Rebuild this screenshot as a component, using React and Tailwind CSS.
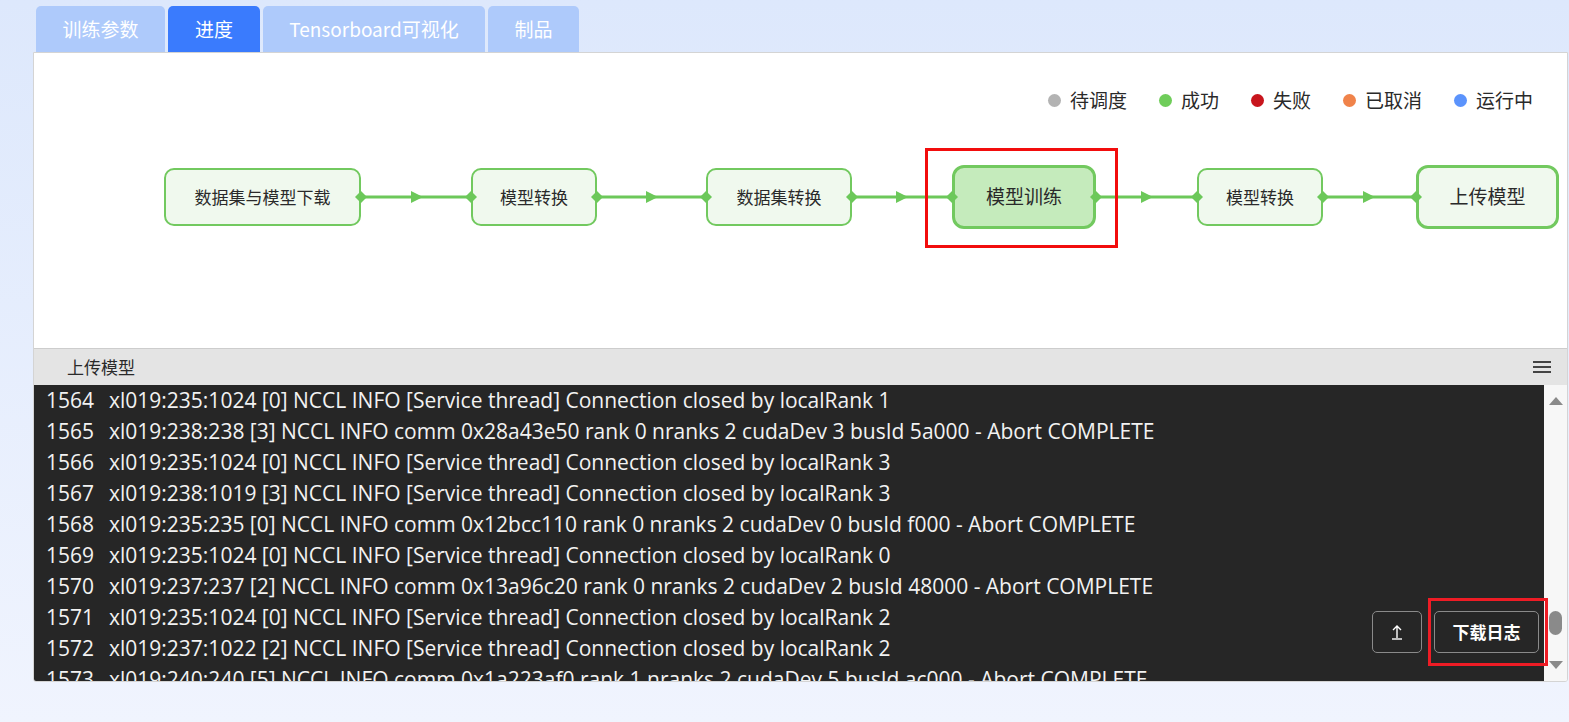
const tabs = [
  { label: "训练参数", w: "w-[129px]" },
  { label: "进度", w: "w-[92px]", active: true },
  { label: "Tensorboard可视化", w: "w-[222px]" },
  { label: "制品", w: "w-[91px]" },
];

const legend = [
  { label: "待调度", color: "bg-[#b3b3b3]" },
  { label: "成功", color: "bg-[#6fcd5a]" },
  { label: "失败", color: "bg-[#c8151d]" },
  { label: "已取消", color: "bg-[#f0834a]" },
  { label: "运行中", color: "bg-[#5b93fc]" },
];

const logs = [
  ["1564", "xl019:235:1024 [0] NCCL INFO [Service thread] Connection closed by localRank 1"],
  ["1565", "xl019:238:238 [3] NCCL INFO comm 0x28a43e50 rank 0 nranks 2 cudaDev 3 busId 5a000 - Abort COMPLETE"],
  ["1566", "xl019:235:1024 [0] NCCL INFO [Service thread] Connection closed by localRank 3"],
  ["1567", "xl019:238:1019 [3] NCCL INFO [Service thread] Connection closed by localRank 3"],
  ["1568", "xl019:235:235 [0] NCCL INFO comm 0x12bcc110 rank 0 nranks 2 cudaDev 0 busId f000 - Abort COMPLETE"],
  ["1569", "xl019:235:1024 [0] NCCL INFO [Service thread] Connection closed by localRank 0"],
  ["1570", "xl019:237:237 [2] NCCL INFO comm 0x13a96c20 rank 0 nranks 2 cudaDev 2 busId 48000 - Abort COMPLETE"],
  ["1571", "xl019:235:1024 [0] NCCL INFO [Service thread] Connection closed by localRank 2"],
  ["1572", "xl019:237:1022 [2] NCCL INFO [Service thread] Connection closed by localRank 2"],
  ["1573", "xl019:240:240 [5] NCCL INFO comm 0x1a223af0 rank 1 nranks 2 cudaDev 5 busId ac000 - Abort COMPLETE"],
];

const cjk = "font-['Noto_Sans_CJK_SC',sans-serif]";

// flow edge: diamond on both ends, arrow head a bit past the middle
const Connector = ({ w }) => {
  const tip = Math.round(w * 0.56);
  return (
    <svg width={w} height="14" className="overflow-visible shrink-0 relative z-10">
      <line x1="0" y1="7" x2={w} y2="7" stroke="#6cc85a" strokeWidth="3" />
      <polygon points="-6,7 0,1 6,7 0,13" fill="#6cc85a" />
      <polygon points={`${w - 6},7 ${w},1 ${w + 6},7 ${w},13`} fill="#6cc85a" />
      <polygon points={`${tip - 12},1 ${tip},7 ${tip - 12},13`} fill="#6cc85a" />
    </svg>
  );
};

const Node = ({ label, w, big, active }) => (
  <div
    className={`${w} ${big ? "h-[64px] text-[19px] rounded-[12px] border-[3px]" : "h-[58px] text-[17px] rounded-[10px] border-2"} ${
      active ? "bg-[#c5ebbc]" : "bg-[#f0f9ee]"
    } border-[#72c95f] flex items-center justify-center text-[#2a2a2a] shrink-0`}
  >
    {label}
  </div>
);

export default function App() {
  return (
    <div className={`min-h-screen h-[722px] bg-gradient-to-b from-[#dde8fc] to-[#f0f4fe] pt-[6px] overflow-hidden ${cjk}`}>
      <div className="ml-[36px] flex gap-[3px]">
        {tabs.map((t) => (
          <div
            key={t.label}
            className={`${t.w} h-[46px] rounded-t-[5px] flex items-center justify-center text-white text-[19px] ${
              t.active ? "bg-[#3a7bfd]" : "bg-[#aecafb]"
            }`}
          >
            {t.label}
          </div>
        ))}
      </div>

      <div className="ml-[33px] w-[1535px] h-[630px] bg-white border border-[#d4d4d4] rounded-b-[3px] flex flex-col overflow-hidden">
        <div className="h-[295px] shrink-0 flex flex-col">
          <div className="flex justify-end items-center gap-[32px] pr-[34px] mt-[33px] text-[19px] text-[#2a2a2a]">
            {legend.map((l) => (
              <div key={l.label} className="flex items-center gap-[9px]">
                <span className={`w-[13px] h-[13px] rounded-full ${l.color}`} />
                {l.label}
              </div>
            ))}
          </div>

          <div className="flex items-center ml-[130px] mt-[50px]">
            <Node label="数据集与模型下载" w="w-[197px]" />
            <Connector w={110} />
            <Node label="模型转换" w="w-[126px]" />
            <Connector w={109} />
            <Node label="数据集转换" w="w-[146px]" />
            <Connector w={100} />
            <div className="relative">
              <Node label="模型训练" w="w-[144px]" big active />
              <div className="absolute left-[-27px] right-[-22px] top-[-17px] bottom-[-19px] border-[3px] border-[#f20d0d] z-20" />
            </div>
            <Connector w={101} />
            <Node label="模型转换" w="w-[126px]" />
            <Connector w={93} />
            <Node label="上传模型" w="w-[143px]" big />
          </div>
        </div>

        <div className="h-[37px] shrink-0 bg-[#e4e4e4] border-t border-[#cdcdcd] flex items-center justify-between pl-[33px] pr-[16px] text-[17px] text-[#2a2a2a]">
          <span>上传模型</span>
          <svg width="18" height="12" viewBox="0 0 18 12">
            <rect x="0" y="0" width="18" height="2" fill="#444" />
            <rect x="0" y="5" width="18" height="2" fill="#444" />
            <rect x="0" y="10" width="18" height="2" fill="#444" />
          </svg>
        </div>

        <div className="flex-1 flex min-h-0 relative">
          <div className="flex-1 bg-[#262626] overflow-hidden font-['Open_Sans','Noto_Sans_CJK_SC',sans-serif] text-[21px] leading-[31px] text-[#f2f2f2] pl-[12px]">
            {logs.map(([n, text]) => (
              <div key={n} className="flex whitespace-nowrap">
                <span className="w-[63px] shrink-0">{n}</span>
                <span>{text}</span>
              </div>
            ))}
          </div>
          <div className="w-[23px] shrink-0 bg-[#f7f7f7] flex flex-col items-center justify-between py-[12px] relative">
            <svg width="14" height="8" viewBox="0 0 14 8">
              <polygon points="0,8 7,0 14,8" fill="#8a8a8a" />
            </svg>
            <div className="absolute top-[226px] w-[13px] h-[24px] rounded-full bg-[#8a8a8a]" />
            <svg width="14" height="8" viewBox="0 0 14 8">
              <polygon points="0,0 14,0 7,8" fill="#8a8a8a" />
            </svg>
          </div>

          <div className="absolute left-[1338px] top-[226px] flex gap-[12px] items-center">
            <button className="w-[50px] h-[42px] rounded-[5px] border border-[#8a8a8a] bg-[#262626] text-white flex items-center justify-center">
              <svg width="12" height="16" viewBox="0 0 12 16">
                <path d="M6 14V2M2 6l4-4 4 4" stroke="white" strokeWidth="1.4" fill="none" />
                <line x1="1" y1="15" x2="11" y2="15" stroke="white" strokeWidth="1.4" />
              </svg>
            </button>
            <div className="relative">
              <button className="w-[105px] h-[42px] rounded-[5px] border border-[#8a8a8a] bg-[#262626] text-white text-[17px] font-bold flex items-center justify-center">
                下载日志
              </button>
              <div className="absolute left-[-6px] right-[-9px] top-[-13px] bottom-[-13px] border-[3px] border-[#ee1c25]" />
            </div>
          </div>
        </div>
      </div>
    </div>
  );
}
